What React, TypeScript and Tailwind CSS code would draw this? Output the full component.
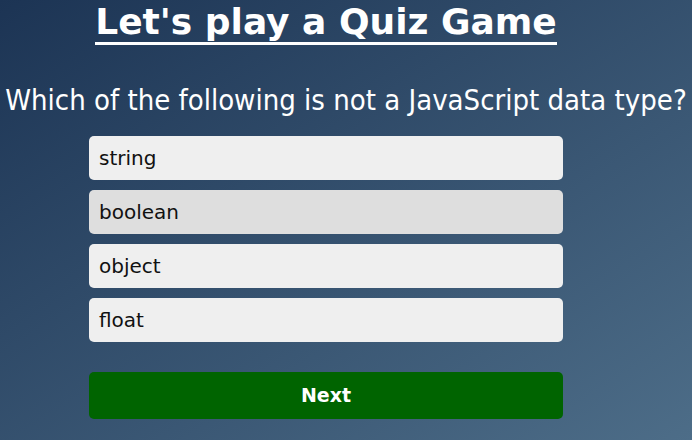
const options = ["string", "boolean", "object", "float"];

export default function App() {
  return (
    <div className="min-h-[440px] w-full overflow-hidden bg-[linear-gradient(to_bottom_right,#1c3454,#4d6d88)] font-['DejaVu_Sans',sans-serif] text-white">
      <div className="ml-[89px] w-[474px] pt-[2px] text-center">
        <h1 className="inline-block border-b-[3px] border-white text-[36px] font-bold leading-[40px]">
          Let's play a Quiz Game
        </h1>
      </div>
      <p className="-mx-10 mt-[38px] text-center font-['DejaVu_Sans_Condensed','DejaVu_Sans',sans-serif] text-[29px] leading-[34px]">
        Which of the following is not a JavaScript data type?
      </p>
      <div className="ml-[89px] mt-[19px] flex w-[474px] flex-col gap-[10px]">
        {options.map((o, i) => (
          <div
            key={o}
            className={`flex h-[44px] items-center rounded-[5px] px-[10px] text-[20px] text-[#111] ${
              i === 1 ? "bg-[#dedede]" : "bg-[#efefef]"
            }`}
          >
            {o}
          </div>
        ))}
        <button
          type="button"
          className="mt-[20px] h-[47px] w-full rounded-[5px] bg-[#006400] text-[19px] font-bold text-white"
        >
          Next
        </button>
      </div>
    </div>
  );
}
